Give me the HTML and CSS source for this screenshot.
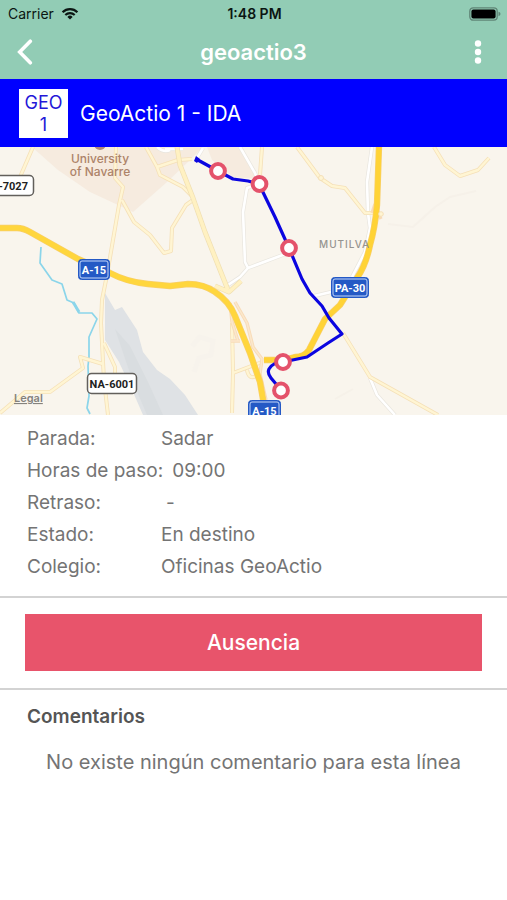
FILE: index.html
```html
<!DOCTYPE html>
<html lang="es">
<head>
<meta charset="utf-8">
<meta name="viewport" content="width=device-width, initial-scale=1">
<title>geoactio3</title>
<link rel="stylesheet" href="styles.css">
</head>
<body>
<header class="top">
  <div class="status">
    <div class="status-left">
      <span>Carrier</span>
      <svg class="wifi" viewBox="0 0 18 13" aria-hidden="true">
        <path d="M1.6 5.2a10.6 10.6 0 0 1 14.8 0" fill="none" stroke="#0b1512" stroke-width="2.3"/>
        <path d="M4.3 8.1a6.7 6.7 0 0 1 9.4 0" fill="none" stroke="#0b1512" stroke-width="2.1"/>
        <path d="M9 12.6L6.4 9.9a3.7 3.7 0 0 1 5.2 0z" fill="#0b1512"/>
      </svg>
    </div>
    <time class="clock">1:48 PM</time>
    <svg class="battery" viewBox="0 0 32 14" aria-hidden="true">
      <rect x=".8" y=".8" width="27.4" height="12.4" rx="3.4" fill="none" stroke="#608577" stroke-width="1.3"/>
      <rect x="2.4" y="2.4" width="24.2" height="9.2" rx="2" fill="#000"/>
      <path d="M29.5 4.8q2 .6 2 2.2t-2 2.2z" fill="#608577"/>
    </svg>
  </div>
  <nav class="nav">
    <button class="icon-button" type="button" aria-label="Volver">
      <svg class="back" viewBox="0 0 16 26"><path d="M13.3 2.2L2.7 13l10.6 10.8" fill="none" stroke="#fff" stroke-width="3.6" stroke-linecap="round" stroke-linejoin="miter"/></svg>
    </button>
    <h1 class="title">geoactio3</h1>
    <button class="icon-button end" type="button" aria-label="Más opciones">
      <svg class="more" viewBox="0 0 8 24"><g fill="#fff"><circle cx="4" cy="3.5" r="3.2"/><circle cx="4" cy="12" r="3.2"/><circle cx="4" cy="20.5" r="3.2"/></g></svg>
    </button>
  </nav>
</header>

<section class="line">
  <span class="line-code">GEO 1</span>
  <h2 class="line-name">GeoActio 1 - IDA</h2>
</section>

<main>
  <svg class="map" viewBox="0 147 507 268" role="img" aria-label="Mapa de la línea">
    <rect y="147" width="507" height="268" fill="#f9f5ed"/>
    <path d="M32 147L58 170 90 192 133 212 167 182 190 160 203 147z" fill="#f6ebdf"/>
    <path d="M207 147L240 147 258 179 233 177 212 160z" fill="#f6ebdf"/>
    <path d="M105 293L115 310 122 307 137 330 143 352 157 370 170 379 185 395 198 415H143L133 392 119 362 105 340z" fill="#dfe2e5"/>
    <path d="M115 329L130 346 148 382 163 415H147L133 382z" fill="#d9dde0"/>
    <path d="M192 346l8-9 13 4-2 14-12 3-5 14" fill="none" stroke="#f7f3ec" stroke-width="5"/>
    <path d="M388 224l25 3 22-20 15-10 26-6M335 399l18-10" fill="none" stroke="#f6f1e9" stroke-width="2"/>
    <path d="M41 247L40 263 52 280 62 284 67 300 74 303 79 313 92 313 97 319 89 337 89 357 88 366 89 396 87 408 90 414" fill="none" stroke="#8bd5ea" stroke-width="1.7" stroke-linejoin="round"/>
    <path d="M73 302L79 312" stroke="#8bd5ea" stroke-width="3"/>

    <g fill="none" stroke-linejoin="round">
      <path d="M240 147L255 173 259 184 247 188 243 212 245 262 248 268 240 277 228 285M248 268L288 253M372 147L367 182 368 213 370 228 365 252 352 277M370 378L377 395 395 415M314 296l17-4M165 149h18M203 148l-6 10M157 147q7 6 13 3" stroke="#e9e6df" stroke-width="4"/>
      <path d="M240 147L255 173 259 184 247 188 243 212 245 262 248 268 240 277 228 285M248 268L288 253M372 147L367 182 368 213 370 228 365 252 352 277M370 378L377 395 395 415M314 296l17-4M165 149h18M203 148l-6 10M157 147q7 6 13 3" stroke="#fff" stroke-width="2.6"/>
      <path d="M33 147L20 177M116 147L115 178 123 187 119 205 107 275 102 300 101 323 103 362 104 380 108 415M122 200L134 222 150 235 164 253 171 251 172 228 186 205 193 200M146 147L157 167 178 160 192 159M157 167L160 175 183 187 192 196M262 147L260 175M297 147L320 178 332 186 345 188 365 213 380 213M434 147L445 165 460 176 478 170 489 158M0 413L25 392 50 392 83 368 80 357 103 364M104 343L115 367 115 376M343 333L370 377 438 415M232 413L233 373 232 323M233 373L262 362M247 370q2 10 9 6" stroke="#f5e0b8" stroke-width="4"/>
      <path d="M33 147L20 177M116 147L115 178 123 187 119 205 107 275 102 300 101 323 103 362 104 380 108 415M122 200L134 222 150 235 164 253 171 251 172 228 186 205 193 200M146 147L157 167 178 160 192 159M157 167L160 175 183 187 192 196M262 147L260 175M297 147L320 178 332 186 345 188 365 213 380 213M434 147L445 165 460 176 478 170 489 158M0 413L25 392 50 392 83 368 80 357 103 364M104 343L115 367 115 376M343 333L370 377 438 415M232 413L233 373 232 323M233 373L262 362M247 370q2 10 9 6" stroke="#fff5d3" stroke-width="2.4"/>
      <path d="M177 147L180 165 193 198 205 232 228 290M241 281L229 292 215 286" stroke="#f0dfb2" stroke-width="5"/>
      <path d="M177 147L180 165 193 198 205 232 228 290M241 281L229 292 215 286" stroke="#fff1c2" stroke-width="3.6"/>
      <path d="M230 303L232 322 238 341M235 302L247 323 253 347 262 359 260 374 266 400M231 341h9M372 213l3-9M378 213l3 6" stroke="#f8dbb8" stroke-width="3.4"/>
      <path d="M230 303L232 322 238 341M235 302L247 323 253 347 262 359 260 374 266 400M231 341h9" stroke="#fbe8cc" stroke-width="1.5"/>
      <path d="M0 228H17Q23 228 30 232L78 259 110 273Q127 282 148 284L170 286 188 284Q204 284 215 292 229 301 235 316L250 353 260 382 264 405" stroke="#f8cf6a" stroke-width="6.4"/>
      <path d="M0 228H17Q23 228 30 232L78 259 110 273Q127 282 148 284L170 286 188 284Q204 284 215 292 229 301 235 316L250 353 260 382 264 405" stroke="#ffd63d" stroke-width="5"/>
      <path d="M379 146L377 205Q375 228 370 245 366 265 357 278L340 305 325 319 309 350Q304 357 295 357L284 360 264 360" stroke="#f8cf6a" stroke-width="6.4"/>
      <path d="M379 146L377 205Q375 228 370 245 366 265 357 278L340 305 325 319 309 350Q304 357 295 357L284 360 264 360" stroke="#ffd336" stroke-width="5"/>
    </g>
    <g fill="#fff5d3" stroke="#f5e0b8"><circle cx="321" cy="178" r="2.5"/><circle cx="381" cy="214" r="2.3"/></g>

    <circle cx="100" cy="144" r="6" fill="#b18978"/>
    <g class="place"><text x="100" y="163">University</text><text x="100" y="176">of Navarre</text></g>
    <text class="town" x="319" y="248">MUTILVA</text>
    <text class="legal" x="14" y="402">Legal</text>

    <g class="plate">
      <rect x="-14" y="175.500" width="47.500" height="20" rx="4"/>
      <rect x="87.500" y="373.500" width="49" height="20" rx="4"/>
    </g>
    <g class="plate-text"><text x="28" y="190" text-anchor="end">A-7027</text><text x="112" y="387.500" text-anchor="middle">NA-6001</text></g>
    <g fill="#2459c5" stroke="#2459c5">
      <rect x="78.500" y="259.500" width="31" height="20" rx="3"/>
      <rect x="331.500" y="277.500" width="37" height="20" rx="3"/>
      <rect x="248.500" y="400.500" width="32" height="20" rx="3"/>
    </g>
    <g fill="none" stroke="#c4d7fa">
      <rect x="80" y="261" width="28" height="17" rx="2"/>
      <rect x="333" y="279" width="34" height="17" rx="2"/>
      <rect x="250" y="402" width="29" height="17" rx="2"/>
    </g>
    <g class="shield-text"><text x="94" y="273.500">A-15</text><text x="350" y="291.500">PA-30</text><text x="264.500" y="414.500">A-15</text></g>

    <path d="M196 159L218 171 233 179 248 181 259 184 275 217 289 248 302 279 310 293 322 306 329 318 342 334 328 343 310 355 307 357 283 362Q273 362 269 369 267 373 271 378L281 390" fill="none" stroke="#0b05e0" stroke-width="3.2" stroke-linejoin="round"/>
    <path d="M196 156l4 3-3 4-3-2z" fill="#0b05e0"/>
    <g fill="#fff" stroke="#e4526b" stroke-width="4">
      <circle cx="218" cy="171" r="6.900"/><circle cx="259.500" cy="184" r="6.900"/><circle cx="289" cy="248" r="6.900"/><circle cx="283" cy="362" r="6.900"/><circle cx="281" cy="390.500" r="6.900"/>
    </g>
  </svg>

  <dl class="details">
    <div class="row"><dt>Parada:</dt><dd>Sadar</dd></div>
    <div class="row"><dt>Horas de paso:</dt><dd>09:00</dd></div>
    <div class="row"><dt>Retraso:</dt><dd class="empty">-</dd></div>
    <div class="row"><dt>Estado:</dt><dd>En destino</dd></div>
    <div class="row"><dt>Colegio:</dt><dd>Oficinas GeoActio</dd></div>
  </dl>

  <div class="action">
    <button class="absence" type="button">Ausencia</button>
  </div>

  <section class="comments">
    <h3 class="comments-title">Comentarios</h3>
    <p class="comments-empty">No existe ningún comentario para esta línea</p>
  </section>
</main>
</body>
</html>
```
FILE: styles.css
```css
* {
  box-sizing: border-box;
}

body {
  margin: 0;
  background: #fff;
  color: #747474;
  font-family: Inter, "Liberation Sans", sans-serif;
}

h1, h2, h3, p, dl, dd {
  margin: 0;
}

button {
  border: 0;
  padding: 0;
  font: inherit;
  cursor: pointer;
}

.top {
  background: #92ccb5;
}

.status {
  display: grid;
  grid-template-columns: 1fr auto 1fr;
  align-items: center;
  height: 27px;
  padding: 0 6px 0 8px;
  color: #0b1512;
  font-size: 14px;
}

.status-left {
  display: flex;
  align-items: center;
  gap: 7px;
}

.wifi {
  width: 18px;
  height: 13px;
}

.clock {
  font-size: 14px;
  font-weight: 600;
}

.battery {
  justify-self: end;
  width: 32px;
  height: 14px;
}

.nav {
  display: grid;
  grid-template-columns: 1fr auto 1fr;
  align-items: center;
  height: 52px;
  padding: 0 17px 2px;
}

.icon-button {
  display: flex;
  justify-self: start;
  background: none;
}

.icon-button.end {
  justify-self: end;
  padding: 0 8px;
}

.back {
  width: 16px;
  height: 26px;
}

.more {
  width: 8px;
  height: 24px;
}

.title {
  color: #fff;
  font-size: 22px;
  font-weight: 600;
  line-height: 28px;
}

.line {
  display: flex;
  align-items: center;
  gap: 12px;
  height: 68px;
  padding: 0 19px;
  background: #00f;
}

.line-code {
  width: 49px;
  height: 49px;
  padding-top: 3px;
  background: #fff;
  color: #2418d8;
  font-size: 18px;
  line-height: 22px;
  text-align: center;
}

.line-name {
  color: #fff;
  font-size: 21px;
  font-weight: 400;
}

.map {
  display: block;
  width: 100%;
}

.place {
  fill: #ad8369;
  font-size: 12px;
  font-weight: 500;
  text-anchor: middle;
}

.town {
  fill: #969490;
  font-size: 10px;
  font-weight: 500;
  letter-spacing: 1px;
}

.legal {
  fill: #85827d;
  font-size: 11px;
  font-weight: 600;
  text-decoration: underline;
}

.plate {
  fill: #fff;
  stroke: #625f5b;
  stroke-width: 1.5;
}

.plate-text {
  fill: #222;
  font: bold 11px Roboto, "Liberation Sans", sans-serif;
}

.shield-text {
  fill: #fff;
  font: bold 11px Roboto, "Liberation Sans", sans-serif;
  text-anchor: middle;
}

.details {
  padding: 8px 27px 13px;
  font-size: 19px;
  line-height: 32px;
}

.row {
  display: flex;
}

.row dt {
  min-width: 134px;
  padding-right: 9px;
}

.row .empty {
  padding-left: 5px;
}

.action {
  padding: 16px 25px 17px;
  border-top: 2px solid #d3d3d3;
  border-bottom: 2px solid #d3d3d3;
}

.absence {
  display: block;
  width: 100%;
  height: 57px;
  background: #e8546b;
  color: #fff;
  font-size: 21px;
  font-weight: 500;
}

.comments {
  padding: 15px 27px;
}

.comments-title {
  color: #555;
  font-size: 19px;
  font-weight: 600;
  line-height: 24px;
}

.comments-empty {
  margin-top: 19px;
  font-size: 20px;
  line-height: 28px;
  text-align: center;
}
```
